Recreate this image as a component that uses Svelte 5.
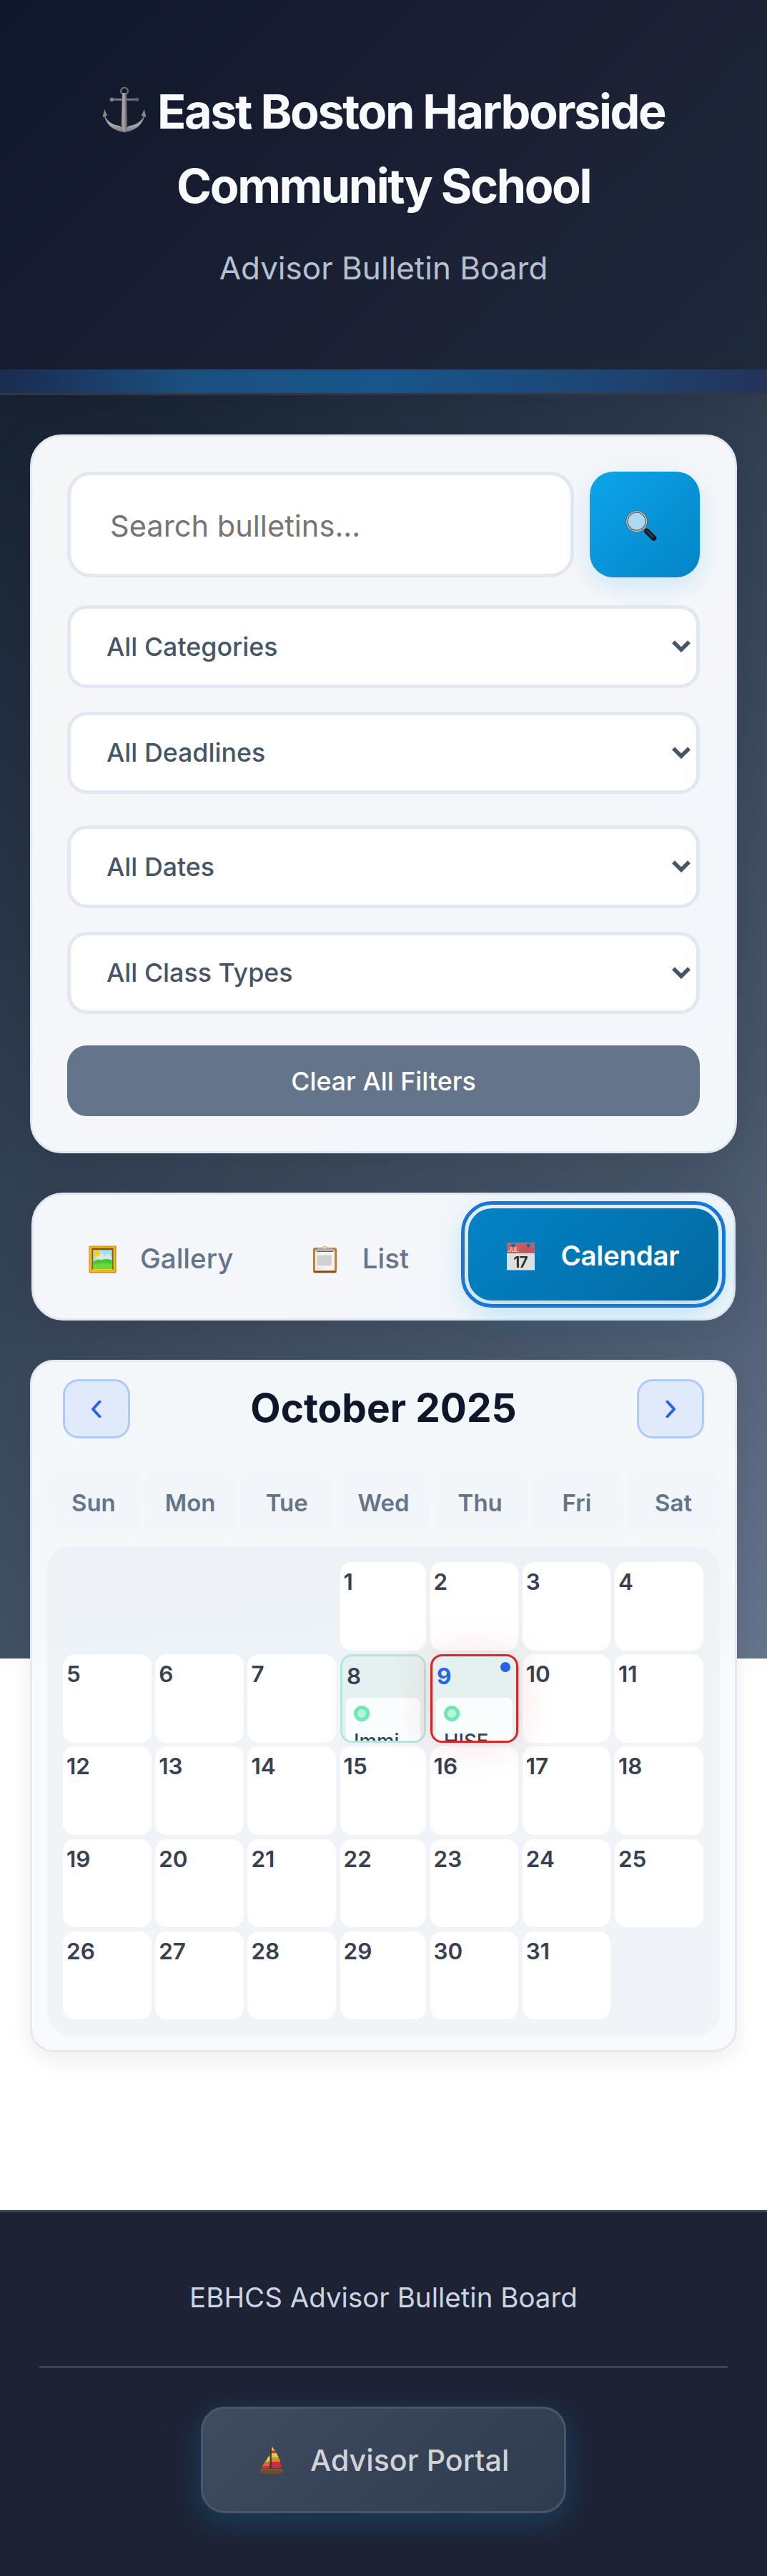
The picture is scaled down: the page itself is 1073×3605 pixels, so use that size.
<script>
  const filters = [
    ['All Categories', 'All Deadlines'],
    ['All Dates', 'All Class Types'],
  ];
  const weekdays = ['Sun', 'Mon', 'Tue', 'Wed', 'Thu', 'Fri', 'Sat'];
  const blanks = [0, 1, 2];
  const events = { 8: 'Immi', 9: 'HISE' };
  const today = 9;
  const days = Array.from({ length: 31 }, (_, i) => i + 1);
</script>

<div class="page">
  <div class="backdrop"></div>
  <header class="header">
    <h1>
      <svg class="anchor" viewBox="0 0 62 66" fill="none">
        <defs>
          <linearGradient id="shank" x1="0" x2="1" y1="0" y2="0">
            <stop offset="0" stop-color="#8f8f91" />
            <stop offset=".4" stop-color="#a9a9ab" />
            <stop offset="1" stop-color="#4e4e50" />
          </linearGradient>
          <linearGradient id="arms" x1="0" x2="0" y1="0" y2="1">
            <stop offset="0" stop-color="#6c6c6e" />
            <stop offset=".6" stop-color="#aaaaac" />
            <stop offset="1" stop-color="#77777a" />
          </linearGradient>
        </defs>
        <circle cx="31" cy="6.500" r="4.900" stroke="#69696c" stroke-width="2.400" />
        <path d="M14 18.200h34" stroke="#77777a" stroke-width="3" />
        <circle cx="13.500" cy="18.200" r="2.800" fill="#808083" />
        <circle cx="48.500" cy="18.200" r="2.800" fill="#5b5b5e" />
        <path d="M2 38C4 52 14 62 31 64c17-2 27-12 29-26-4 9-11 16-22 17l-3 2h-8l-3-2C13 54 6 47 2 38z" fill="url(#arms)" />
        <path d="M28 9h6l1.200 46-4.200 10-4.200-10z" fill="url(#shank)" />
        <path d="M0.500 43l2.700-11 4 9-3 1zM61.500 43l-2.700-11-4 9 3 1z" fill="#88888b" />
      </svg>
      East Boston Harborside<br />Community School
    </h1>
    <p>Advisor Bulletin Board</p>
    <div class="wave"></div>
  </header>

  <main>
    <section class="card filters">
      <div class="search-row">
        <div class="search">Search bulletins...</div>
        <button class="search-btn" aria-label="Search">
          <svg viewBox="0 0 44 44">
            <path d="M25 25l5 5" stroke="#5f6468" stroke-width="3.500" />
            <path d="M30 29.500L39.500 39" stroke="#17181a" stroke-width="7.500" stroke-linecap="round" />
            <path d="M30 29l8.500 8.500" stroke="#47494c" stroke-width="1.500" stroke-linecap="round" />
            <circle cx="15.700" cy="15.700" r="13.600" fill="#addaf0" stroke="#585d61" stroke-width="3.400" />
            <circle cx="15.700" cy="15.700" r="13.800" fill="none" stroke="#c3c8cb" stroke-width="1.300" />
          </svg>
        </button>
      </div>
      {#each filters as pair}
        <div class="pair">
          {#each pair as label}
            <div class="select">
              <span>{label}</span>
              <svg viewBox="0 0 26 17"><path d="M2 2.200L13 13.200 24 2.200" fill="none" stroke="#475569" stroke-width="5.500" /></svg>
            </div>
          {/each}
        </div>
      {/each}
      <button class="clear">Clear All Filters</button>
    </section>

    <nav class="card tabs">
      <div class="tab gallery">
        <svg class="emoji" viewBox="0 0 40 40">
          <rect x=".5" y=".5" width="39" height="39" rx="1" fill="#c98f08" />
          <rect x="1.500" y="1.500" width="36.500" height="36.500" fill="#eebb22" />
          <rect x="4.500" y="3.500" width="31" height="32" fill="#8a5c0a" />
          <path d="M4.500 35.500l2.500-2.500h26l2.500 2.500z" fill="#f5cf3a" />
          <rect x="6.500" y="6.500" width="27" height="27" fill="#a5e2f6" />
          <circle cx="11.500" cy="12" r="4.800" fill="#f7cf16" />
          <path d="M11 18q1-5 5-4 2-5 5-1l2 4q2-6 6-4 4 1 4.500 6v4H11z" fill="#dfe4ec" />
          <path d="M6.500 24q6-6 11-3 8-3 16 0v12.500h-27z" fill="#43c82f" />
          <path d="M6.500 28q13-5 27-1v6.500h-27z" fill="#6bd83a" />
        </svg>
        <span>Gallery</span>
      </div>
      <div class="tab list">
        <svg class="emoji" viewBox="0 0 40 40">
          <rect x="3" y="3" width="34" height="36.500" rx="3" fill="#b27e43" />
          <path d="M5 36.500h30l1 2.500H4z" fill="#7d4f21" />
          <rect x="6" y="7" width="28" height="29" fill="#f4f4f5" />
          <rect x="8.500" y="14" width="21" height="15" fill="#d0d0d2" />
          <path d="M8.500 11h5M8.500 33h6" stroke="#cfcfd1" stroke-width="1.200" />
          <path d="M8 7.500V5.500q0-1.500 5-1.500h3.500q1-3.500 3.500-3.500T23.500 4H27q5 0 5 1.500v2z" fill="#adb3b9" />
          <circle cx="20" cy="3" r="1.300" fill="#f4f6fa" />
          <path d="M8 8.500h24" stroke="#67625e" stroke-width="1.400" />
        </svg>
        <span>List</span>
      </div>
      <div class="tab active">
        <svg class="emoji" viewBox="0 0 40 40">
          <rect y=".5" width="40" height="39" rx="1" fill="#dedfe0" />
          <path d="M0 .500h40v15H0z" fill="#c55e60" />
          <circle cx="9" cy="4" r="2.600" fill="#1f6a97" />
          <circle cx="31" cy="4" r="2.600" fill="#1f6a97" />
          <text x="1.500" y="13.500" font-size="8.500" fill="#f0c9c9">JUL</text>
          <path d="M22 7.500v6M25 7.500v6M28 7.500v6M31 7.500v6M34 7.500v6M37 7.500v6" stroke="#b04e51" />
          <text x="19.500" y="35.500" font-size="22" fill="#252628" text-anchor="middle" letter-spacing="-1">17</text>
        </svg>
        <span>Calendar</span>
      </div>
    </nav>

    <section class="calendar">
      <div class="month">
        <button class="step" aria-label="Previous month">
          <svg viewBox="0 0 24 24"><path d="M16.500 1.500L7 12l9.500 10.500" /></svg>
        </button>
        <h2>October 2025</h2>
        <button class="step" aria-label="Next month">
          <svg viewBox="0 0 24 24"><path d="M7.500 1.500L17 12 7.500 22.500" /></svg>
        </button>
      </div>
      <div class="weekdays">
        {#each weekdays as name}<div>{name}</div>{/each}
      </div>
      <div class="grid">
        {#each blanks as b}<div class="blank"></div>{/each}
        {#each days as d}
          <div class="day" class:busy={events[d]} class:today={d === today}>
            <span class="num">{d}</span>
            {#if events[d]}
              <div class="event"><i></i><span>{events[d]}</span></div>
            {/if}
          </div>
        {/each}
      </div>
    </section>
  </main>

  <footer>
    <p>EBHCS Advisor Bulletin Board</p>
    <hr />
    <button class="portal">
      <svg viewBox="0 0 34 40">
        <defs>
          <clipPath id="sails">
            <path d="M17 .5Q28 13 31 30q-7 2-15 0zM15 10Q10 20 2 31q7 1 12 0z" />
          </clipPath>
        </defs>
        <g clip-path="url(#sails)">
          <rect width="34" height="34" fill="#cf2c45" />
          <path d="M15.500 0H34v6.500H15.500zM15.500 10H34v6H15.500z" fill="#cfd03c" />
          <path d="M15.500 16H34v6H15.500z" fill="#d98a3a" />
          <path d="M0 17.500l15.500-3v7L0 23.500z" fill="#cfd03c" />
          <path d="M0 23.500l15.500-2v6L0 28.500z" fill="#dc6b33" />
        </g>
        <path d="M16 1v35" stroke="#3a3238" stroke-width="1.500" />
        <path d="M0 33.500q17-2 34 0-2 5.500-8 5.500H8q-6 0-8-5.500z" fill="#7a4a22" />
        <path d="M1 33.700q16-1.700 32 0" stroke="#9b6a3a" fill="none" />
      </svg>
      <span>Advisor Portal</span>
    </button>
  </footer>
</div>

<style>
  :global(body) { margin: 0; background: #fff; }
  .page, .page * { box-sizing: border-box; }
  .page {
    position: relative;
    width: 1073px;
    height: 3605px;
    display: flex;
    flex-direction: column;
    font-family: Inter, sans-serif;
    overflow: hidden;
  }
  button { font-family: inherit; padding: 0; }
  .backdrop {
    position: absolute;
    inset: 0 0 auto;
    height: 2321px;
    background: linear-gradient(135deg, #0f172a 0%, #1e293b 25%, #334155 50%, #475569 75%, #64748b 100%);
  }
  .header {
    position: relative;
    height: 553px;
    padding-top: 105px;
    text-align: center;
    background: linear-gradient(135deg, #0f172a 0%, #1a2033 50%, #1e293b 100%);
    border-bottom: 3px solid #303848;
    box-shadow: 0 11px 88px rgba(0, 0, 0, .15);
  }
  h1 {
    margin: 0;
    font-size: 66.500px;
    line-height: 103.500px;
    font-weight: 700;
    letter-spacing: -2.400px;
    color: #f8fafc;
  }
  .anchor { width: 62px; height: 66px; vertical-align: -7px; margin-right: 2px; }
  .header p {
    margin: 28px 0 0;
    font-size: 44px;
    line-height: 70px;
    color: #b6c0cf;
  }
  .wave {
    position: absolute;
    inset: auto 0 0;
    height: 33px;
    background: linear-gradient(90deg, #1a2b50 0%, #1a5080 25%, #18558b 50%, #1c4878 75%, #23335a 100%);
  }
  main { position: relative; padding: 55px 42px 0; }
  .card {
    border: 3px solid #e2e8f0;
    border-radius: 44px;
    background: #f5f7fa;
    box-shadow: 0 11px 66px rgba(0, 0, 0, .12);
  }
  .filters {
    height: 1006px;
    padding: 49px;
    display: flex;
    flex-direction: column;
    background: linear-gradient(135deg, #f4f6f7, #f5f6fa 50%, #f2f7fa);
  }
  .search-row { display: flex; gap: 22px; height: 148px; margin-bottom: 39px; }
  .search {
    flex: 1;
    display: flex;
    align-items: center;
    padding: 4px 0 0 55px;
    border: 5.500px solid #e2e8f0;
    border-radius: 33px;
    background: #fff;
    color: #757575;
    font-size: 41.600px;
  }
  .search-btn {
    width: 154px;
    border: 0;
    border-radius: 33px;
    background: linear-gradient(135deg, #0ea5e9, #0284c7);
    box-shadow: 0 11px 33px rgba(14, 165, 233, .18);
  }
  .search-btn svg { width: 44px; height: 44px; display: block; margin: 4px 0 0 50px; }
  .pair { display: flex; flex-direction: column; gap: 33px; margin-bottom: 44px; }
  .select {
    height: 115.500px;
    display: flex;
    align-items: center;
    justify-content: space-between;
    padding: 0 8px 0 50px;
    border: 5.500px solid #e2e8f0;
    border-radius: 27.500px;
    background: #fff;
    color: #475569;
    font-size: 35.750px;
    font-weight: 500;
  }
  .select svg { width: 26px; height: 17px; }
  .clear {
    height: 99px;
    border: 0;
    border-radius: 27.500px;
    background: #64748b;
    color: #fff;
    font-size: 35.750px;
    font-weight: 500;
  }
  .tabs {
    display: flex;
    margin: 55px 2px 0;
    height: 179px;
    padding: 19px 22px;
    background: linear-gradient(135deg, #f6f6fa, #f2f7fa);
  }
  .tab {
    display: flex;
    align-items: center;
    height: 137px;
    padding-top: 6px;
    gap: 33px;
    font-size: 38.500px;
    font-weight: 500;
    color: #64748b;
  }
  .emoji { width: 39px; height: 39px; flex: none; }
  .tab span { margin-top: -3px; }
  .gallery { width: 310px; padding-left: 55px; }
  .list { width: 277px; padding-left: 56px; }
  .active {
    width: 350px;
    height: 129px;
    padding-left: 54px;
    gap: 36px;
    margin-left: auto;
    margin-right: -1px;
    color: #fff;
    font-weight: 600;
    letter-spacing: -.3px;
    border-radius: 33px;
    background: linear-gradient(135deg, #0284c7, #0369a1);
    outline: 5.500px solid #1976d9;
    outline-offset: 5.500px;
    box-shadow: 0 11px 44px rgba(14, 165, 233, .35);
  }
  .calendar {
    height: 969px;
    margin-top: 55px;
    padding: 24px 21px;
    border: 3px solid #e4e9f1;
    border-radius: 33px;
    background: linear-gradient(180deg, #f4f7fa 0, #f6f7f9 40%, #f9fafc 45%, #f9fafc 100%);
    box-shadow: 0 11px 33px rgba(0, 0, 0, .07);
  }
  .month { display: flex; justify-content: space-between; align-items: center; padding: 0 22px; height: 83px; }
  h2 { margin: -4px 0 0; font-size: 55px; font-weight: 700; color: #0f172a; }
  .step {
    width: 94px;
    height: 83px;
    border: 3px solid #adcafa;
    border-radius: 22px;
    background: #e0eafa;
  }
  .step svg { display: block; width: 24px; height: 24px; margin: 0 auto; }
  .step path { fill: none; stroke: #2563eb; stroke-width: 4; stroke-linecap: round; stroke-linejoin: round; }
  .weekdays { display: grid; grid-template-columns: repeat(7, 1fr); gap: 5.500px; margin-top: 47px; }
  .weekdays div {
    height: 88px;
    line-height: 86px;
    border-radius: 16px;
    background: #f2f5fa;
    text-align: center;
    font-size: 33px;
    font-weight: 600;
    color: #64748b;
  }
  .grid {
    display: grid;
    grid-template-columns: 123.700px 123.700px 123.700px 120.500px 123.700px 123.700px 123.700px;
    grid-auto-rows: 123.700px;
    gap: 5.500px;
    margin-top: 16px;
    padding: 22px;
    height: 684.500px;
    border-radius: 33px;
    background: linear-gradient(175deg, #eef1f6 0, #edf3f6 25%, #f0f4f8 40%);
  }
  .day {
    position: relative;
    overflow: hidden;
    padding: 13px 4px 0;
    border-radius: 16.500px;
    background: #fff;
  }
  .num { display: block; font-size: 31.500px; line-height: 30px; font-weight: 600; color: #374151; padding-left: 1px; }
  .busy { padding: 13px 5.500px 0; border: 3px solid #b6e6da; background: #e4f1f0; }
  .today { border-color: #dc2626; box-shadow: 0 0 55px rgba(220, 38, 38, .15); z-index: 1; }
  .today .num { color: #2563eb; font-weight: 700; }
  .today::after {
    content: '';
    position: absolute;
    top: 8px;
    right: 8px;
    width: 14px;
    height: 14px;
    border-radius: 50%;
    background: #2563eb;
  }
  .event { margin-top: 15px; height: 80px; padding: 11px; border-radius: 8px; background: #fafdfe; }
  .event i {
    display: block;
    width: 22px;
    height: 22px;
    border: 5.500px solid #6ee7b7;
    border-radius: 50%;
    background: #b7f5d8;
  }
  .event span { display: block; margin-top: 10px; font-size: 27.500px; line-height: 34px; font-weight: 500; color: #374151; }
  footer {
    position: relative;
    margin-top: auto;
    height: 512px;
    padding: 95px 55px 0;
    display: flex;
    flex-direction: column;
    border-top: 3px solid #364255;
    background: #1e2235;
  }
  footer p { margin: 0; text-align: center; font-size: 38.500px; line-height: 48px; color: #cbd5e1; }
  hr { width: 100%; height: 3px; margin: 72px 0 0; border: 0; background: #3a4557; }
  .portal {
    align-self: center;
    width: 511px;
    height: 149px;
    margin-top: 54px;
    padding-left: 79px;
    display: flex;
    align-items: center;
    gap: 37px;
    border: 3px solid #4a5568;
    border-radius: 33px;
    background: linear-gradient(135deg, #3f4b5e, #2f3b4e);
    box-shadow: 0 11px 44px rgba(14, 116, 165, .4);
    color: #d1d3d6;
    font-size: 41.200px;
    font-weight: 500;
  }
  .portal svg { width: 34px; height: 40px; }
</style>
